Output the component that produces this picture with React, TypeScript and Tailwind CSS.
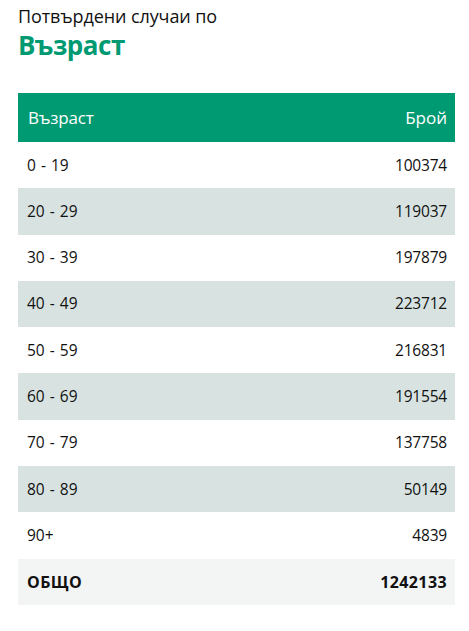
const rows = [
  ["0 - 19", "100374"],
  ["20 - 29", "119037"],
  ["30 - 39", "197879"],
  ["40 - 49", "223712"],
  ["50 - 59", "216831"],
  ["60 - 69", "191554"],
  ["70 - 79", "137758"],
  ["80 - 89", "50149"],
  ["90+", "4839"],
];

const App = () => {
  return (
    <div className="bg-white w-[469px] h-[631px] px-[18px] pt-[4px] text-[#111] font-['Open_Sans',sans-serif]">
      <h2 className="text-[18px] leading-[25px] tracking-[-0.1px]">Потвърдени случаи по</h2>
      <h1 className="text-[26px] leading-[33px] font-bold text-[#009a72] tracking-[-0.5px]">Възраст</h1>

      <table className="w-[437px] mt-[31px] border-collapse text-[15.5px]">
        <thead>
          <tr className="bg-[#009a72] text-white h-[49px] text-[17px]">
            <th className="text-left font-normal pl-[10px] tracking-[-0.2px]">Възраст</th>
            <th className="text-right font-normal pr-[8px]">Брой</th>
          </tr>
        </thead>
        <tbody>
          {rows.map(([age, count], i) => (
            <tr key={age} className={i % 2 === 1 ? "bg-[#d8e3e1] h-[46.3px]" : "bg-white h-[46.3px]"}>
              <td className="pl-[9px] [word-spacing:1px]">{age}</td>
              <td className="text-right pr-[8px] tracking-[-0.2px]">{count}</td>
            </tr>
          ))}
          <tr className="bg-[#f2f5f4] h-[46.3px] font-bold text-[16px] tracking-[0.4px]">
            <td className="pl-[9px]">ОБЩО</td>
            <td className="text-right pr-[8px]">1242133</td>
          </tr>
        </tbody>
      </table>
    </div>
  );
};

export default App;
